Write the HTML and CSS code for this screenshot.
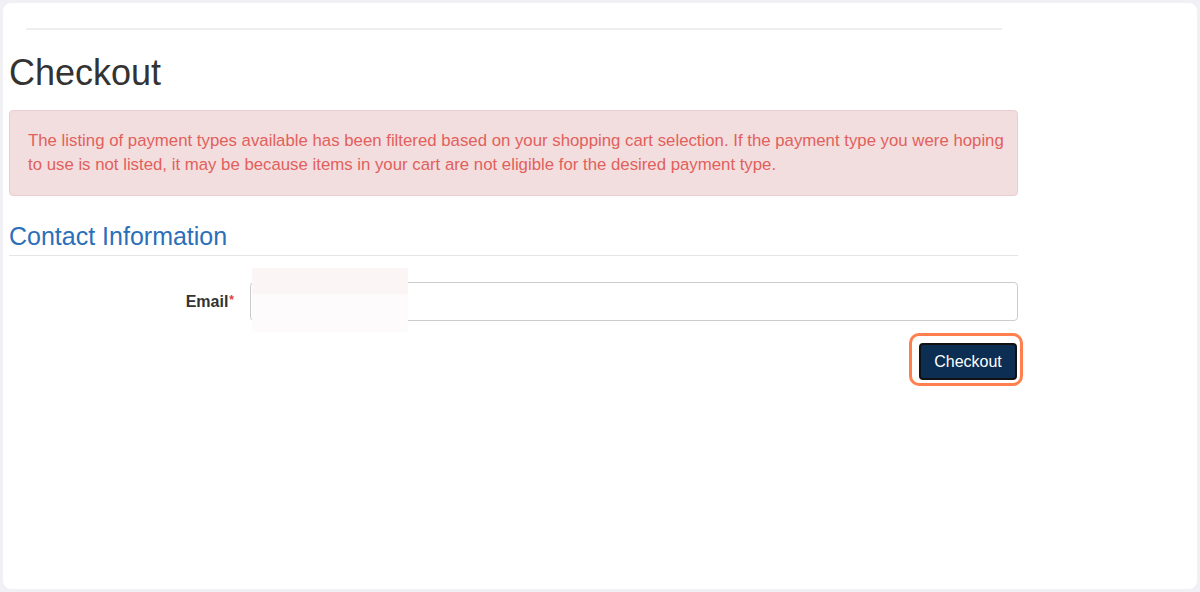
FILE: index.html
```html
<!DOCTYPE html>
<html lang="en">
  <head>
    <meta charset="UTF-8" />
    <meta name="viewport" content="width=device-width, initial-scale=1.0" />
    <title>Checkout</title>
    <link rel="stylesheet" href="styles.css">
  </head>
  <body>
    <div class="frame">
      <div class="page">
        <hr class="top-rule" />
        <h1 class="title">Checkout</h1>

        <div class="alert">
          The listing of payment types available has been filtered based on your shopping cart selection. If the payment type you were hoping to use is not listed, it may be because items in your cart are not eligible for the desired payment type.
        </div>

        <h2 class="section-title">Contact Information</h2>

        <form class="form">
          <div class="form-row">
            <label class="form-label" for="email">Email<span class="required">*</span></label>
            <div class="form-field">
              <input class="form-input" type="text" id="email" />
              <div class="redacted"></div>
            </div>
          </div>
          <div class="form-actions">
            <button class="btn-checkout" type="button">Checkout</button>
          </div>
        </form>
      </div>
    </div>
  </body>
</html>
```

FILE: styles.css
```css
* {
  margin: 0;
  padding: 0;
  box-sizing: border-box;
}

body {
  font-family: "Liberation Sans", Arial, sans-serif;
  background-color: #f0f0f5;
  color: #333;
  padding: 3px;
  height: 592px;
  overflow: hidden;
}

.frame {
  background-color: #fff;
  border-radius: 8px;
  height: 586px;
  width: 1194px;
}

.page {
  width: 1015px;
  padding-left: 6px;
}

.top-rule {
  border: none;
  border-top: 2px solid #efeff2;
  margin: 0 16px 0 17px;
  position: relative;
  top: 25px;
}

.title {
  font-size: 36px;
  font-weight: 400;
  line-height: 40px;
  margin-top: 48px;
  color: #333;
}

.alert {
  margin-top: 17px;
  background-color: #f2dede;
  border: 1px solid #ebccd1;
  border-radius: 4px;
  padding: 18px 10px 18px 18px;
  color: #e2605c;
  font-size: 16.8px;
  line-height: 24px;
}

.section-title {
  margin-top: 25px;
  font-size: 25px;
  font-weight: 400;
  line-height: 30px;
  color: #2b6fba;
  padding-bottom: 4px;
  border-bottom: 1px solid #e5e5e5;
}

.form {
  margin-top: 26px;
}

.form-row {
  display: flex;
  align-items: center;
}

.form-label {
  width: 241px;
  padding-right: 16px;
  text-align: right;
  font-weight: 700;
  font-size: 16px;
  color: #333;
}

.required {
  color: #e0403b;
  font-size: 12px;
  vertical-align: top;
  margin-left: 1px;
}

.form-field {
  flex: 1;
  position: relative;
}

.form-input {
  display: block;
  width: 100%;
  height: 39px;
  border: 1px solid #ccc;
  border-radius: 4px;
  font-size: 16px;
  padding: 6px 12px;
}

/* blurred-out box over the input */
.redacted {
  position: absolute;
  left: 2px;
  top: -14px;
  width: 156px;
  height: 64px;
  background: linear-gradient(#fbf6f5 0, #fbf6f5 26px, #fdfbfb 26px);
}

.form-actions {
  display: flex;
  justify-content: flex-end;
  margin-top: 22px;
  padding-right: 1px;
}

.btn-checkout {
  position: relative;
  font-family: "Liberation Sans", Arial, sans-serif;
  font-size: 16px;
  color: #fff;
  background-color: #0b2e52;
  border: 2px solid #111;
  border-radius: 4px;
  width: 98px;
  height: 37px;
}

/* highlight ring around the button */
.btn-checkout::after {
  content: "";
  position: absolute;
  top: -12px;
  left: -12px;
  right: -8px;
  bottom: -8px;
  border: 3px solid #ff7f4f;
  border-radius: 10px;
}
```
